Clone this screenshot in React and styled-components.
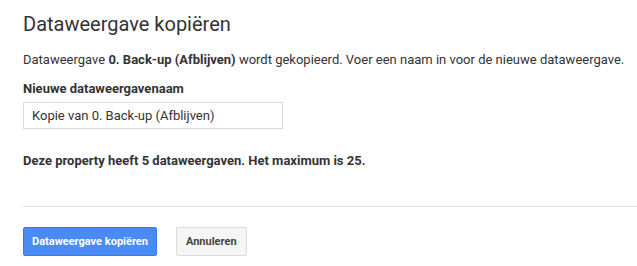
import React from "react";
import styled, { createGlobalStyle } from "styled-components";

const Global = createGlobalStyle`
  html, body { margin: 0; padding: 0; background: #fff; }
  body { font-family: Roboto, "Noto Sans", Arial, sans-serif; color: #333; }
`;

const Page = styled.div`
  padding: 12px 0 0 23px;
  display: flex;
  flex-direction: column;
`;

const Title = styled.h1`
  margin: 0;
  font-size: 20px;
  font-weight: 400;
  line-height: 24px;
  color: #333;
`;

const Intro = styled.p`
  margin: 16px 0 0;
  font-size: 13px;
  line-height: 16px;
  color: #333;
  b { font-weight: 700; }
`;

const Label = styled.label`
  margin-top: 13px;
  font-size: 13px;
  font-weight: 700;
  line-height: 16px;
  color: #333;
`;

const Input = styled.input`
  margin-top: 5px;
  box-sizing: border-box;
  width: 260px;
  height: 27px;
  border: 1px solid #d9d9d9;
  padding: 0 8px;
  font-family: inherit;
  font-size: 13px;
  color: #333;
  outline: none;
`;

const Notice = styled.p`
  margin: 24px 0 0;
  font-size: 13px;
  font-weight: 700;
  line-height: 16px;
  color: #333;
`;

const Divider = styled.hr`
  margin: 37px 0 0;
  border: 0;
  border-top: 1px solid #e0e0e0;
  height: 0;
`;

const Actions = styled.div`
  margin-top: 20px;
  display: flex;
  gap: 19px;
`;

const Button = styled.button`
  box-sizing: border-box;
  height: 29px;
  padding: 0 ${(p) => (p.$primary ? 8 : 9)}px;
  border: 1px solid ${(p) => (p.$primary ? "#3b7ae6" : "#dcdcdc")};
  border-radius: 2px;
  background: ${(p) => (p.$primary ? "#4a8af4" : "#f5f5f5")};
  color: ${(p) => (p.$primary ? "#fff" : "#444")};
  font-family: inherit;
  font-size: 11px;
  font-weight: 700;
  cursor: pointer;
`;

export default function App() {
  return (
    <>
      <Global />
      <Page>
        <Title>Dataweergave kopiëren</Title>
        <Intro>
          Dataweergave <b>0. Back-up (Afblijven)</b> wordt gekopieerd. Voer een naam in voor de nieuwe dataweergave.
        </Intro>
        <Label htmlFor="naam">Nieuwe dataweergavenaam</Label>
        <Input id="naam" defaultValue="Kopie van 0. Back-up (Afblijven)" />
        <Notice>Deze property heeft 5 dataweergaven. Het maximum is 25.</Notice>
        <Divider />
        <Actions>
          <Button $primary>Dataweergave kopiëren</Button>
          <Button>Annuleren</Button>
        </Actions>
      </Page>
    </>
  );
}
